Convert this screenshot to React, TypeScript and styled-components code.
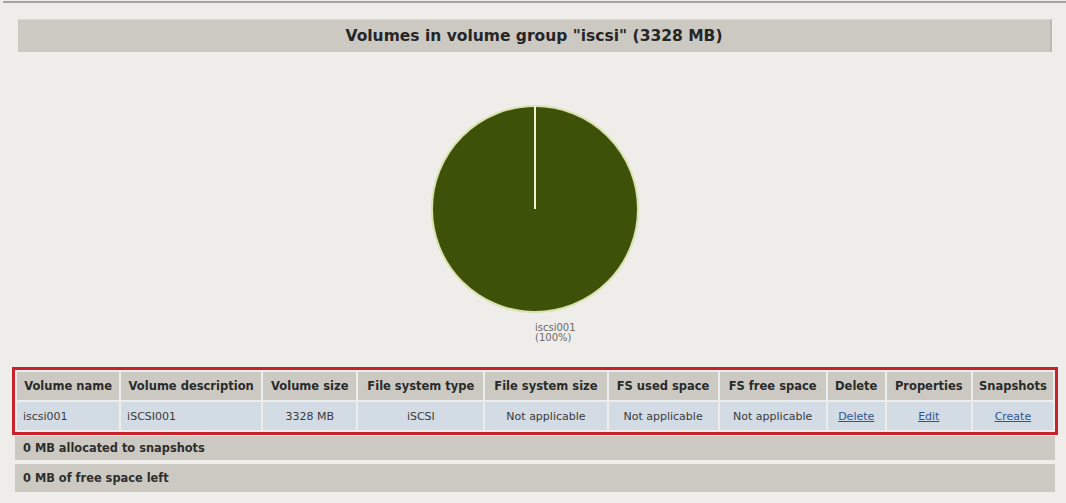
import React from 'react';
import styled, { createGlobalStyle } from 'styled-components';

const GlobalStyle = createGlobalStyle`
  html, body {
    margin: 0;
    padding: 0;
    background: #eeede9;
    font-family: "DejaVu Sans", Verdana, sans-serif;
    color: #2e2e2e;
  }
`

const Pagina = styled.div`
  width: 1066px;
  height: 503px;
  overflow: hidden;
`

const LinhaTopo = styled.div`
  margin-left: 3px;
  margin-top: 1px;
  border-top: 2px solid #a3a19d;
`

const Conteudo = styled.div`
  width: 1040px;
  margin-left: 15px;
  padding-top: 16px;
`

const BarraTitulo = styled.div`
  margin: 0 3px;
  height: 33px;
  background: #ccc9c3;
  border-top: 1px solid #dcd9d3;
  border-right: 2px solid #bdbab4;
  box-sizing: border-box;
  display: flex;
  align-items: center;
  justify-content: center;
  font-size: 15.5px;
  font-weight: 700;
  color: #262626;
`

const AreaGrafico = styled.div`
  height: 318px;
  display: flex;
  flex-direction: column;
  align-items: center;
  padding-top: 52px;
  box-sizing: border-box;
`

const Legenda = styled.div`
  width: 210px;
  padding-left: 105px;
  box-sizing: border-box;
  margin-top: 9px;
  font-size: 10px;
  line-height: 10px;
  color: #6a6a6a;
`

const Tabela = styled.table`
  width: 1040px;
  border-collapse: separate;
  border-spacing: 2px;
  background: #eceeee;
  outline: 3px solid #c8232b;
  font-size: 11px;
`

const Cabecalho = styled.th<{ $w: number }>`
  width: ${p => p.$w}px;
  height: 28px;
  padding: 0;
  background: #ccc9c3;
  font-size: 11.5px;
  font-weight: 700;
  color: #2a2a2a;
  text-align: center;
  white-space: nowrap;
`

const Celula = styled.td<{ $esquerda?: boolean }>`
  height: 28px;
  padding: ${p => (p.$esquerda ? '0 0 0 6px' : '0')};
  background: #d3dce5;
  color: #3a3a3a;
  text-align: ${p => (p.$esquerda ? 'left' : 'center')};
  white-space: nowrap;
`

const Link = styled.a`
  color: #2f5590;
  text-decoration: underline;
  cursor: pointer;
`

const BarraInfo = styled.div`
  height: 24px;
  margin-top: 4px;
  padding-left: 8px;
  background: #ccc9c3;
  display: flex;
  align-items: center;
  font-size: 11.4px;
  font-weight: 700;
  color: #2e2e2e;
  & + & {
    height: 28px;
    margin-top: 4px;
  }
`

const colunas = [
  { titulo: 'Volume name', w: 102 },
  { titulo: 'Volume description', w: 140 },
  { titulo: 'Volume size', w: 93 },
  { titulo: 'File system type', w: 125 },
  { titulo: 'File system size', w: 121 },
  { titulo: 'FS used space', w: 109 },
  { titulo: 'FS free space', w: 106 },
  { titulo: 'Delete', w: 57 },
  { titulo: 'Properties', w: 84 },
  { titulo: 'Snapshots', w: 80 },
]

const GraficoPizza = () => (
  <svg width="210" height="210" viewBox="0 0 210 210">
    <circle cx="105" cy="105" r="103" fill="#3d5208" stroke="#d9e2ae" strokeWidth="2" />
    <line x1="105" y1="2" x2="105" y2="105" stroke="#eef2d0" strokeWidth="2" />
  </svg>
)

export default function App() {
  return (
    <Pagina>
      <GlobalStyle />
      <LinhaTopo />
      <Conteudo>
        <BarraTitulo>Volumes in volume group "iscsi" (3328 MB)</BarraTitulo>
        <AreaGrafico>
          <GraficoPizza />
          <Legenda>
            iscsi001
            <br />
            (100%)
          </Legenda>
        </AreaGrafico>
        <Tabela>
          <thead>
            <tr>
              {colunas.map(c => (
                <Cabecalho key={c.titulo} $w={c.w}>{c.titulo}</Cabecalho>
              ))}
            </tr>
          </thead>
          <tbody>
            <tr>
              <Celula $esquerda>iscsi001</Celula>
              <Celula $esquerda>iSCSI001</Celula>
              <Celula>3328 MB</Celula>
              <Celula>iSCSI</Celula>
              <Celula>Not applicable</Celula>
              <Celula>Not applicable</Celula>
              <Celula>Not applicable</Celula>
              <Celula><Link>Delete</Link></Celula>
              <Celula><Link>Edit</Link></Celula>
              <Celula><Link>Create</Link></Celula>
            </tr>
          </tbody>
        </Tabela>
        <BarraInfo>0 MB allocated to snapshots</BarraInfo>
        <BarraInfo>0 MB of free space left</BarraInfo>
      </Conteudo>
    </Pagina>
  )
}
